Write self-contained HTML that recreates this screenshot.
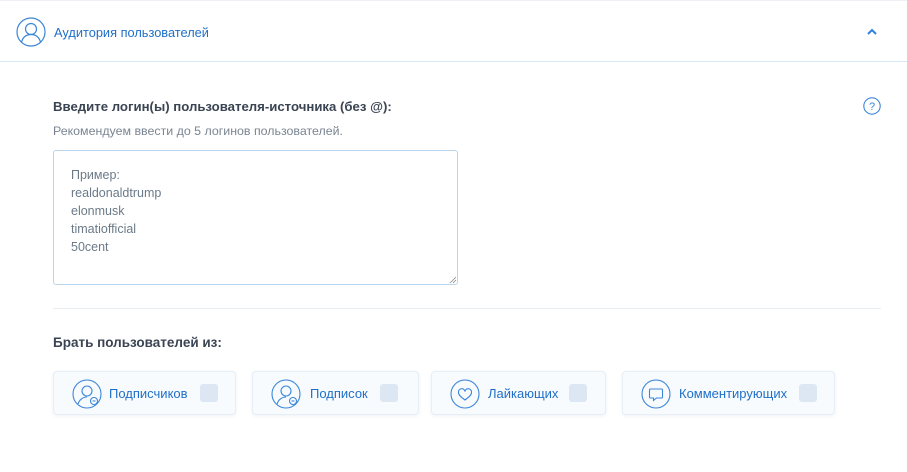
<!DOCTYPE html>
<html><head><meta charset="utf-8"><style>
body{margin:0;width:907px;height:472px;background:#fff;font-family:"Liberation Sans",sans-serif;position:relative;overflow:hidden}
.a{position:absolute}
.hdr{left:0;top:0;width:907px;height:62px;border-top:1px solid #edf1f5;border-bottom:1px solid #d6e8f8;box-sizing:border-box}
.t{font-size:12.8px;color:#1f6fc8}
.btn{position:absolute;top:371px;height:44px;background:#f8fbfe;border:1px solid #e6eef6;border-radius:4px;box-sizing:border-box;box-shadow:0 1px 3px rgba(30,80,140,.08)}
.btn span{position:absolute;top:14px;font-size:13px;color:#1f6fc8}
.cb{position:absolute;top:12px;width:18px;height:18px;background:#dde7f3;border-radius:3px}
.btn svg{position:absolute;left:18px;top:7px}
.ta{left:53px;top:150px;width:405px;height:135px;border:1px solid #b8d6f0;border-radius:3px;box-sizing:border-box;padding:15px 17px;font-size:12.5px;line-height:18px;color:#6b7a88}
</style></head><body>
<div class="a hdr"></div>
<svg class="a" style="left:16px;top:17px" width="30" height="30" viewBox="0 0 30 30" fill="none" stroke="#3b86d8" stroke-width="1.2"><circle cx="15" cy="15" r="14"/><circle cx="15" cy="12" r="5.5"/><path d="M5.5 25c1.5-5 5-7.5 9.5-7.5s8 2.5 9.5 7.5"/></svg>
<div class="a t" style="left:54px;top:25px">Аудитория пользователей</div>
<svg class="a" style="left:866px;top:28px" width="12" height="8" viewBox="0 0 12 8" fill="none" stroke="#2f80e0" stroke-width="2"><path d="M2 6l4-4 4 4"/></svg>
<div class="a" style="left:53px;top:99px;font-size:13.2px;font-weight:bold;color:#3a4452">Введите логин(ы) пользователя-источника (без @):</div>
<div class="a" style="left:53px;top:124px;font-size:12.4px;color:#7a8592">Рекомендуем ввести до 5 логинов пользователей.</div>
<svg class="a" style="left:863px;top:97px" width="18" height="18" viewBox="0 0 18 18"><circle cx="9" cy="9" r="8.2" fill="none" stroke="#3b86d8" stroke-width="1.1"/><text x="9" y="13" font-size="11" text-anchor="middle" fill="#3b86d8" font-family="Liberation Sans">?</text></svg>
<div class="a ta">Пример:<br>realdonaldtrump<br>elonmusk<br>timatiofficial<br>50cent</div>
<svg class="a" style="left:449px;top:276px" width="8" height="8" viewBox="0 0 8 8" stroke="#888" stroke-width="0.8"><path d="M7 1L1 7M7 4L4 7"/></svg>
<div class="a" style="left:53px;top:308px;width:828px;height:1px;background:#e8edf2"></div>
<div class="a" style="left:53px;top:335px;font-size:13.5px;font-weight:bold;color:#3a4452">Брать пользователей из:</div>
<div class="btn" style="left:53px;width:183px"><svg width="30" height="30" viewBox="0 0 30 30" fill="none" stroke="#3b86d8" stroke-width="1.1"><circle cx="15" cy="15" r="14"/><circle cx="15" cy="12" r="5"/><path d="M6 25c1.5-4.5 5-7 9-7"/><circle cx="22" cy="22" r="3.5" fill="#fff"/><path d="M20.5 22h3"/></svg><span style="left:55px">Подписчиков</span><div class="cb" style="left:146px"></div></div>
<div class="btn" style="left:252px;width:167px"><svg width="30" height="30" viewBox="0 0 30 30" fill="none" stroke="#3b86d8" stroke-width="1.1"><circle cx="15" cy="15" r="14"/><circle cx="15" cy="12" r="5"/><path d="M6 25c1.5-4.5 5-7 9-7"/><circle cx="22" cy="22" r="3.5" fill="#fff"/><path d="M20.5 22h3"/></svg><span style="left:57px">Подписок</span><div class="cb" style="left:127px"></div></div>
<div class="btn" style="left:431px;width:175px"><svg width="30" height="30" viewBox="0 0 30 30" fill="none" stroke="#3b86d8" stroke-width="1.1"><circle cx="15" cy="15" r="14"/><path d="M15 21c-4-3-6.5-5-6.5-7.5a3.2 3.2 0 0 1 6.5-1 3.2 3.2 0 0 1 6.5 1C21.5 16 19 18 15 21z"/></svg><span style="left:56px">Лайкающих</span><div class="cb" style="left:137px"></div></div>
<div class="btn" style="left:622px;width:213px"><svg width="30" height="30" viewBox="0 0 30 30" fill="none" stroke="#3b86d8" stroke-width="1.1"><circle cx="15" cy="15" r="14"/><path d="M9.5 10h11a1 1 0 0 1 1 1v7a1 1 0 0 1-1 1h-5l-3 2.5V19h-3a1 1 0 0 1-1-1v-7a1 1 0 0 1 1-1z"/></svg><span style="left:56px">Комментирующих</span><div class="cb" style="left:176px"></div></div>
</body></html>
